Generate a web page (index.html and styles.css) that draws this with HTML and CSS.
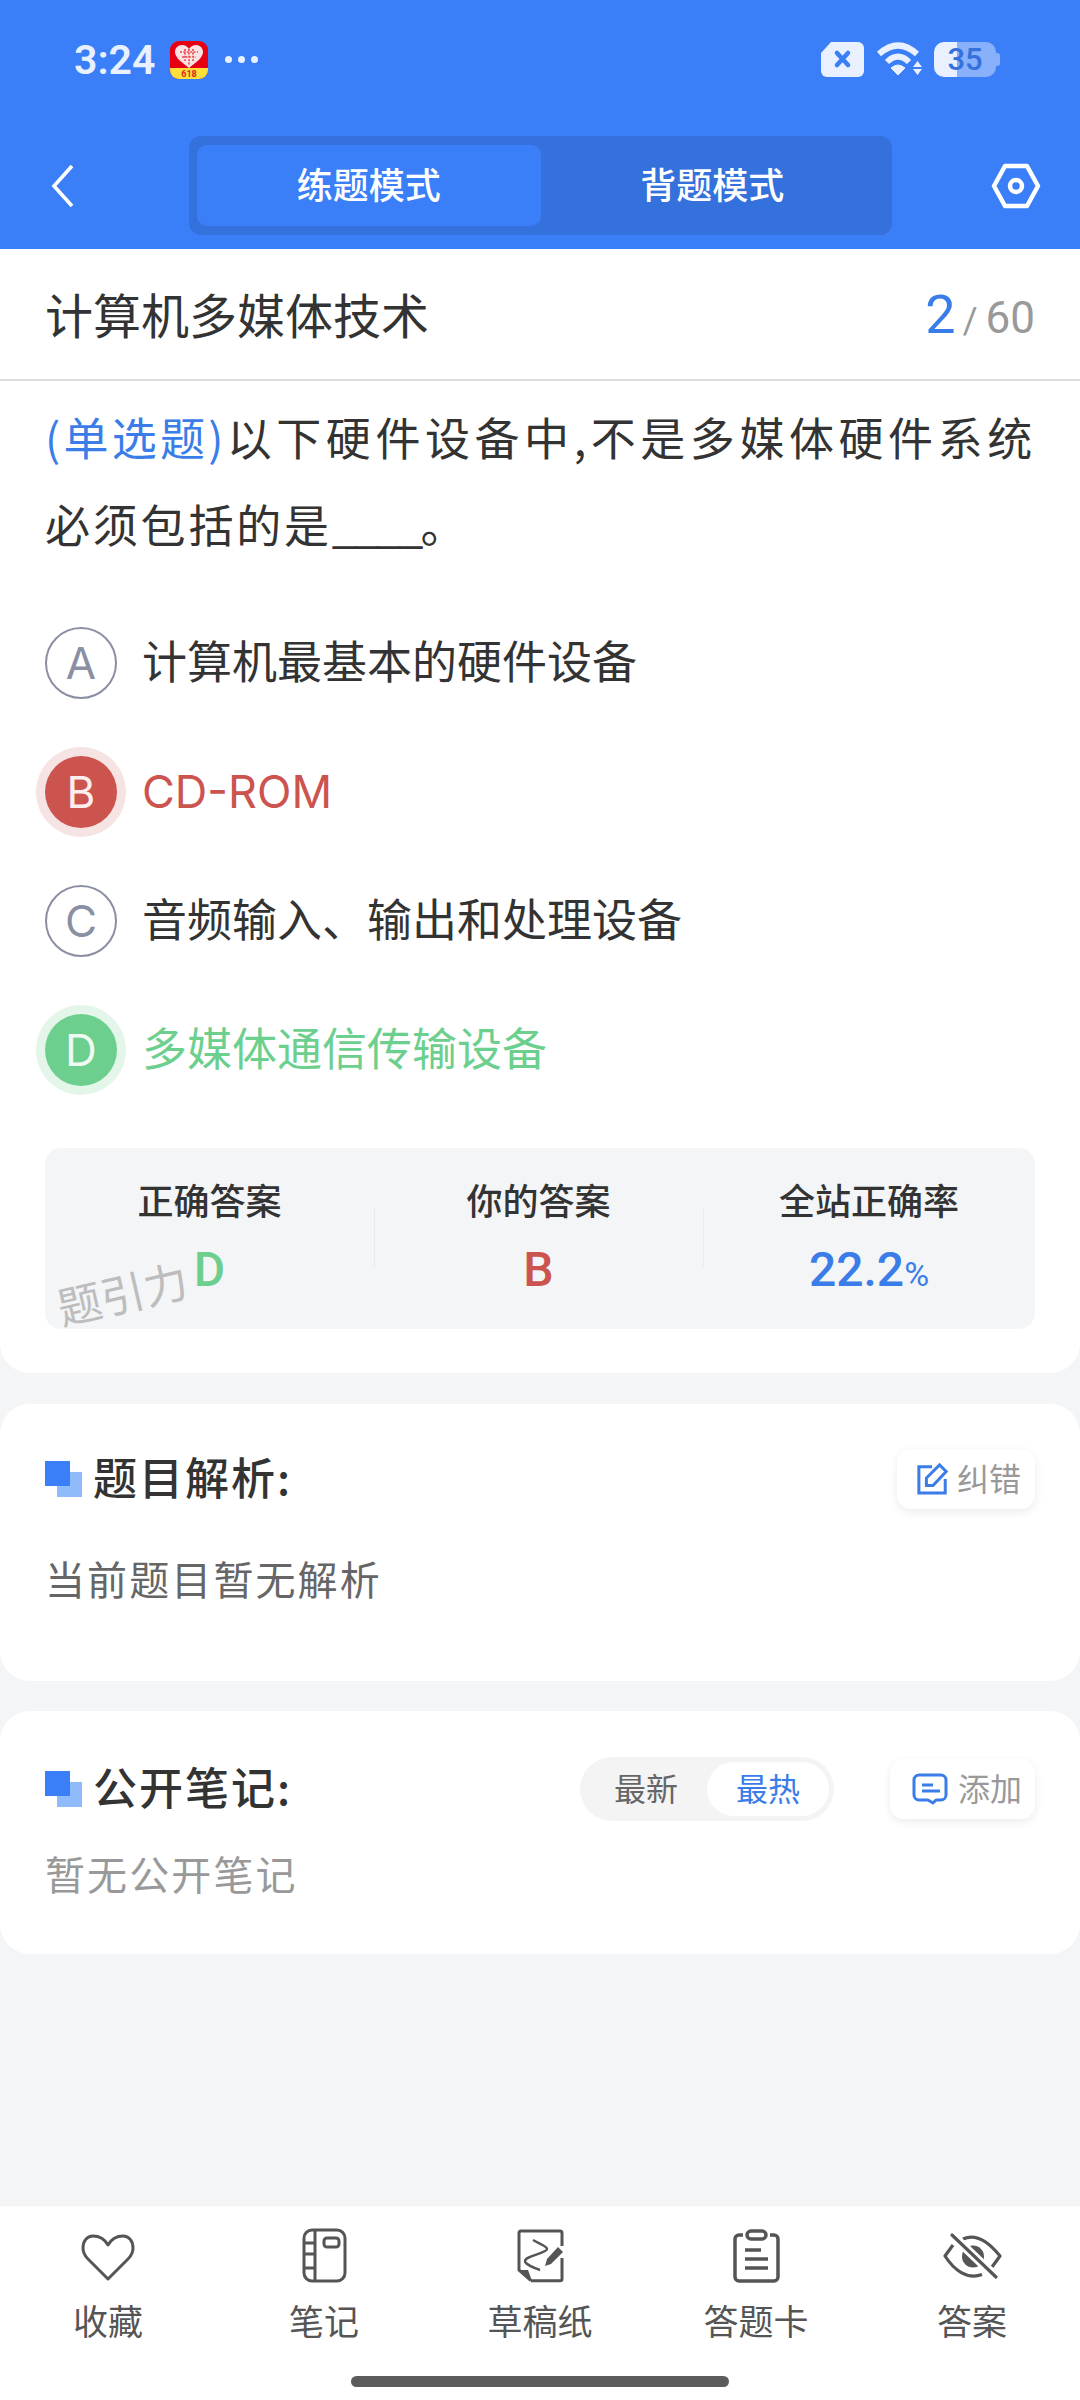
FILE: index.html
```html
<!DOCTYPE html>
<html lang="zh-CN">
<head>
    <meta charset="UTF-8">
    <meta name="viewport" content="width=device-width, initial-scale=1.0">
    <title>练题模式</title>
    <link rel="stylesheet" href="styles.css">
</head>
<body>
<div class="page">

    <!-- Blue header -->
    <header class="header">
        <div class="status-bar">
            <div class="status-left">
                <span class="clock">3:24</span>
                <svg class="app-icon" width="38" height="38" viewBox="0 0 38 38">
                    <rect width="38" height="38" rx="9" fill="#e60012"/>
                    <path d="M0 27h38v2a9 9 0 0 1-9 9H9a9 9 0 0 1-9-9z" fill="#ffdf3a"/>
                    <path d="M19 27C13 22 5 17 5 11c0-4 3-7 7-7 3 0 5 1 7 4 2-3 4-4 7-4 4 0 7 3 7 7 0 6-8 11-14 16z" fill="#fbe3e3"/>
                    <path d="M10 11h18M12 16h14M15 8v12M19 8v16M23 8v12" stroke="#e8434c" stroke-width="1.6" stroke-dasharray="2 1.4"/>
                    <text x="19" y="36" text-anchor="middle" class="app-icon-text">618</text>
                </svg>
                <span class="status-dots"><i></i><i></i><i></i></span>
            </div>
            <div class="status-right">
                <svg width="44" height="35" viewBox="0 0 44 35">
                    <path d="M11 0h27a6 6 0 0 1 6 6v23a6 6 0 0 1-6 6H7a6 6 0 0 1-6-6V11z" fill="#e9f0ff"/>
                    <path d="M17 11l11 12M28 11L17 23" stroke="#3b7ff8" stroke-width="4.5" stroke-linecap="round"/>
                </svg>
                <svg width="46" height="36" viewBox="0 0 46 36">
                    <path d="M3 13Q22-4 41 13M11 21Q22 10 33 21" fill="none" stroke="#e9f0ff" stroke-width="6"/>
                    <path d="M15 27Q22 21 29 27L22 34z" fill="#e9f0ff" stroke="#e9f0ff" stroke-linejoin="round"/>
                    <path d="M37 26l4.500-6 4.500 6zM37 28h9l-4.500 6z" fill="#e9f0ff"/>
                </svg>
                <div class="battery">
                    <span class="battery-num">35</span>
                </div>
            </div>
        </div>
        <nav class="nav">
            <svg class="nav-back" width="26" height="46" viewBox="0 0 26 46">
                <path d="M23 3L5 23l18 20" fill="none" stroke="#fff" stroke-width="3.600"/>
            </svg>
            <div class="mode-tabs">
                <div class="mode-tab mode-tab-on">练题模式</div>
                <div class="mode-tab">背题模式</div>
            </div>
            <svg class="nav-set" width="50" height="46" viewBox="0 0 50 46">
                <path d="M14 3h22l11 20-11 20H14L3 23z" fill="none" stroke="#fff" stroke-width="4.500" stroke-linejoin="round"/>
                <circle cx="25" cy="23" r="6" fill="none" stroke="#fff" stroke-width="4.500"/>
            </svg>
        </nav>
    </header>

    <main class="main">
        <!-- Question card -->
        <section class="card question-card">
            <div class="subject-row">
                <span class="subject">计算机多媒体技术</span>
                <span class="counter"><b>2</b><em>/</em>60</span>
            </div>
            <div class="question"><span class="q-type">(单选题)</span>以下硬件设备中,不是多媒体硬件系统必须包括的是<span class="q-blank">____</span>。</div>

            <div class="options">
                <div class="option">
                    <span class="opt-mark">A</span>
                    <span class="opt-text">计算机最基本的硬件设备</span>
                </div>
                <div class="option wrong">
                    <span class="opt-mark">B</span>
                    <span class="opt-text">CD-ROM</span>
                </div>
                <div class="option">
                    <span class="opt-mark">C</span>
                    <span class="opt-text">音频输入、输出和处理设备</span>
                </div>
                <div class="option right">
                    <span class="opt-mark">D</span>
                    <span class="opt-text">多媒体通信传输设备</span>
                </div>
            </div>

            <div class="stats">
                <div class="stat">
                    <div class="stat-label">正确答案</div>
                    <div class="stat-value green">D</div>
                </div>
                <div class="stat">
                    <div class="stat-label">你的答案</div>
                    <div class="stat-value red">B</div>
                </div>
                <div class="stat">
                    <div class="stat-label">全站正确率</div>
                    <div class="stat-value blue">22.2<small>%</small></div>
                </div>
                <span class="watermark">题引力</span>
            </div>
        </section>

        <!-- Analysis -->
        <section class="card analysis-card">
            <div class="sec-head">
                <span class="sec-mark"></span>
                <h2 class="sec-title">题目解析:</h2>
                <div class="mini-btn">
                    <svg width="32" height="32" viewBox="0 0 34 34">
                        <path d="M16 4H2v28h28V17" fill="none" stroke="#3b7de8" stroke-width="3.200"/>
                        <path d="M10 24v-8L24 2l7 7-14 15z" fill="none" stroke="#3b7de8" stroke-width="3.200"/>
                    </svg>
                    <span>纠错</span>
                </div>
            </div>
            <p class="sec-body analysis-text">当前题目暂无解析</p>
        </section>

        <!-- Public notes -->
        <section class="card notes-card">
            <div class="sec-head">
                <span class="sec-mark"></span>
                <h2 class="sec-title">公开笔记:</h2>
                <div class="sort-pill">
                    <span class="sort-item">最新</span>
                    <span class="sort-item sort-on">最热</span>
                </div>
                <div class="mini-btn add-btn">
                    <svg width="36" height="32" viewBox="0 0 36 32">
                        <path d="M7 2h22a5 5 0 0 1 5 5v15a5 5 0 0 1-5 5h-5l-3 3-5-3H7a5 5 0 0 1-5-5V7a5 5 0 0 1 5-5z" fill="none" stroke="#3b7de8" stroke-width="3" stroke-linejoin="round"/>
                        <path d="M10 12h11M10 18h18" stroke="#3b7de8" stroke-width="3"/>
                    </svg>
                    <span>添加</span>
                </div>
            </div>
            <p class="sec-body notes-text">暂无公开笔记</p>
        </section>
    </main>

    <!-- Bottom toolbar -->
    <footer class="toolbar">
        <div class="tools">
            <div class="tool">
                <svg width="60" height="60" viewBox="0 0 60 60">
                    <path d="M30 19C26 12 20 10 15 10 9 10 5 15 5 22c0 5 2 8 5 11l20 20 20-20c3-3 5-6 5-11 0-7-4-12-10-12-5 0-11 2-15 9z" fill="none" stroke="#555" stroke-width="3" stroke-linejoin="round"/>
                </svg>
                <span>收藏</span>
            </div>
            <div class="tool">
                <svg width="60" height="60" viewBox="0 0 60 60">
                    <rect x="10" y="4" width="41" height="51" rx="8" fill="none" stroke="#555" stroke-width="3"/>
                    <path d="M21 4v51M10 17h11M10 28h11M10 42h11" fill="none" stroke="#555" stroke-width="3"/>
                    <rect x="30" y="12" width="15" height="9" rx="3" fill="none" stroke="#555" stroke-width="3"/>
                </svg>
                <span>笔记</span>
            </div>
            <div class="tool">
                <svg width="60" height="60" viewBox="0 0 60 60">
                    <path d="M21 54.700H50a2 2 0 0 0 2-2V32M52 20V7a2 2 0 0 0-2-2H11a2 2 0 0 0-2 2v37l12 10.700" fill="none" stroke="#555" stroke-width="3"/>
                    <path d="M9 44h9l4 11z" fill="#555"/>
                    <path d="M23 14c7 4 14 6 14 9 0 4-22 7-22 12 0 3 9 7 15 9" fill="none" stroke="#555" stroke-width="2.500"/>
                    <path d="M35 40l2-7 11-12 5 5-12 12z" fill="#555"/>
                </svg>
                <span>草稿纸</span>
            </div>
            <div class="tool">
                <svg width="60" height="60" viewBox="0 0 60 60">
                    <path d="M17 9h-4a4 4 0 0 0-4 4v38a4 4 0 0 0 4 4h35a4 4 0 0 0 4-4V13a4 4 0 0 0-4-4h-4" fill="none" stroke="#555" stroke-width="3.500"/>
                    <rect x="21" y="5" width="19" height="8" rx="4" fill="none" stroke="#555" stroke-width="3.500"/>
                    <path d="M19 24h16M19 33h23M19 42h23" stroke="#555" stroke-width="3.500"/>
                </svg>
                <span>答题卡</span>
            </div>
            <div class="tool">
                <svg width="60" height="60" viewBox="0 0 60 60">
                    <circle cx="31" cy="30.500" r="11" fill="#555"/>
                    <path d="M21 13c13-6 25 2 37 17l-8 11M11 19l-8 11c9 14 22 24 37 18.500" fill="none" stroke="#555" stroke-width="3.200" stroke-linejoin="round"/>
                    <path d="M10 9l44 42" stroke="#fff" stroke-width="9"/>
                    <path d="M10 9l44 42" stroke="#555" stroke-width="3.200" stroke-linecap="round"/>
                </svg>
                <span>答案</span>
            </div>
        </div>
        <div class="home-bar"></div>
    </footer>
</div>
</body>
</html>
```

FILE: styles.css
```css
* {
    box-sizing: border-box;
}

body {
    margin: 0;
    font-family: "Noto Sans CJK SC", "Noto Sans", sans-serif;
    background-color: #f4f5f7;
    color: #333;
}

.page {
    width: 1080px;
    height: 2400px;
    display: flex;
    flex-direction: column;
    overflow: hidden;
}

/* Header */
.header {
    background-color: #3b7ff8;
    height: 249px;
    color: #fff;
}

.status-bar {
    height: 95px;
    padding: 41px 80px 0 74px;
    display: flex;
    justify-content: space-between;
    align-items: flex-start;
}

.status-left {
    display: flex;
    align-items: center;
    gap: 15px;
    height: 37px;
}

.clock {
    font-family: Roboto, sans-serif;
    font-size: 41px;
    font-weight: 600;
    color: #e9f0ff;
}

.app-icon-text {
    font-family: Roboto, sans-serif;
    font-size: 9px;
    font-weight: 700;
    fill: #d9261c;
}

.status-dots {
    display: flex;
    gap: 6px;
    margin-left: 2px;
}

.status-dots i {
    width: 7px;
    height: 7px;
    border-radius: 50%;
    background-color: #e9f0ff;
}

.status-right {
    display: flex;
    align-items: center;
    gap: 12px;
}

.battery {
    position: relative;
    width: 62px;
    height: 35px;
    margin-right: 4px;
    border-radius: 10px;
    background: linear-gradient(90deg, #e9f0ff 23px, #88b0fb 23px);
    display: flex;
    align-items: center;
    justify-content: center;
}

.battery::after {
    content: "";
    position: absolute;
    right: -4px;
    top: 11px;
    width: 4px;
    height: 13px;
    border-radius: 0 3px 3px 0;
    background-color: #88b0fb;
}

.battery-num {
    font-family: Roboto, sans-serif;
    font-size: 31px;
    font-weight: 500;
    color: #3571dc;
}

.nav {
    height: 154px;
    padding: 41px 0 14px 49px;
    display: flex;
    align-items: center;
}

.mode-tabs {
    width: 703px;
    height: 99px;
    margin-left: 114px;
    padding: 9px 8px;
    border-radius: 12px;
    background-color: #3571dc;
    display: flex;
}

.nav-set {
    margin-left: 99px;
}

.mode-tab {
    flex: 1;
    display: flex;
    align-items: center;
    justify-content: center;
    padding-bottom: 5px;
    border-radius: 10px;
    font-size: 36px;
    font-weight: 500;
}

.mode-tab-on {
    background-color: #3b7ff8;
}

/* Main scrolling area */
.main {
    flex: 1;
}

.card {
    background-color: #fff;
    border-radius: 30px;
    margin-bottom: 30px;
}

.question-card {
    height: 1124px;
    border-radius: 0 0 30px 30px;
    padding: 0 45px;
    margin-bottom: 31px;
}

.subject-row {
    height: 132px;
    margin: 0 -45px;
    padding: 0 45px;
    border-bottom: 2px solid #dedede;
    display: flex;
    align-items: center;
    justify-content: space-between;
}

.subject {
    font-size: 48px;
    line-height: 1;
    padding-bottom: 3px;
}

.counter {
    font-family: Roboto, sans-serif;
    font-size: 44px;
    color: #999;
}

.counter b {
    font-size: 54px;
    font-weight: 400;
    color: #3b7de8;
}

.counter em {
    font-style: normal;
    font-size: 36px;
    margin: 0 8px 0 7px;
}

.question {
    margin-top: 12px;
    font-size: 45px;
    line-height: 87px;
    letter-spacing: 2.800px;
    text-align: justify;
}

.q-type {
    color: #3b7de8;
    letter-spacing: 1.500px;
}

.q-blank {
    letter-spacing: -3px;
}

.options {
    margin-top: 31px;
}

.option {
    height: 129px;
    display: flex;
    align-items: center;
    gap: 25px;
    font-family: Inter, "Noto Sans CJK SC", sans-serif;
    font-size: 45px;
}

.opt-text {
    padding-bottom: 6px;
}

.opt-mark {
    width: 72px;
    height: 72px;
    flex-shrink: 0;
    border: 2px solid #8b8fa3;
    border-radius: 50%;
    display: flex;
    align-items: center;
    justify-content: center;
    font-size: 44px;
    color: #8b8fa3;
}

.wrong .opt-mark {
    border: none;
    background-color: #cc544f;
    color: #fdeeee;
    box-shadow: 0 0 0 9px #f6e3e3;
}

.wrong .opt-text {
    color: #cc544f;
    padding-bottom: 0;
}

.right .opt-mark {
    border: none;
    background-color: #6dcf8e;
    color: #eefaf2;
    box-shadow: 0 0 0 9px #e4f6ea;
}

.right .opt-text {
    color: #6dcf8e;
}

/* Answer stats */
.stats {
    position: relative;
    margin-top: 34px;
    height: 181px;
    border-radius: 16px;
    background-color: #f4f5f7;
    display: grid;
    grid-template-columns: 329px 329px 332px;
}

.stat {
    padding-top: 26px;
    text-align: center;
    position: relative;
}

.stat + .stat::before {
    content: "";
    position: absolute;
    left: 0;
    top: 60px;
    height: 59px;
    width: 1px;
    background-color: #e9eaed;
}

.stat-label {
    font-size: 36px;
    font-weight: 500;
    line-height: 50px;
}

.stat-value {
    margin-top: 21px;
    font-family: Roboto, sans-serif;
    font-size: 48px;
    font-weight: 500;
    line-height: 50px;
}

.stat-value small {
    font-size: 34px;
    font-weight: 400;
}

.green {
    color: #6dcf8e;
}

.red {
    color: #cc544f;
}

.blue {
    color: #3b7de8;
}

.watermark {
    position: absolute;
    left: 11px;
    top: 112px;
    font-size: 44px;
    color: #bdbdbd;
    transform: rotate(-13deg);
}

/* Analysis and notes */
.sec-head {
    display: flex;
    align-items: center;
}

.sec-mark {
    width: 25px;
    height: 25px;
    margin-right: 23px;
    margin-top: -11px;
    background-color: #3b7ff8;
    box-shadow: 12px 11px 0 #8fbbfb;
}

.sec-title {
    margin: 0;
    flex: 1;
    font-size: 44px;
    font-weight: 500;
    letter-spacing: 2px;
    line-height: 54px;
    padding-bottom: 6px;
}

.mini-btn {
    height: 60px;
    padding: 0 14px 0 20px;
    border-radius: 14px;
    background-color: #fff;
    box-shadow: 0 3px 10px rgba(0, 0, 0, 0.08);
    display: flex;
    align-items: center;
    gap: 8px;
    font-size: 32px;
    color: #999;
}

.add-btn {
    padding: 0 13px 0 22px;
    gap: 10px;
}

.mini-btn span {
    padding-bottom: 5px;
}

.sec-body {
    margin: 0;
    font-size: 40px;
    letter-spacing: 2.100px;
    line-height: 60px;
}

.analysis-card {
    height: 277px;
    padding: 45px 45px 0;
}

.analysis-text {
    margin-top: 39px;
    color: #666;
}

.notes-card {
    height: 243px;
    padding: 46px 45px 0;
    margin-bottom: 0;
}

.notes-text {
    margin-top: 22px;
    color: #999;
}

.sort-pill {
    width: 254px;
    height: 64px;
    margin-right: 56px;
    padding: 5px;
    border-radius: 32px;
    background-color: #f4f4f5;
    display: flex;
}

.sort-item {
    flex: 1;
    display: flex;
    align-items: center;
    justify-content: center;
    padding-bottom: 5px;
    border-radius: 27px;
    font-size: 32px;
    color: #666;
}

.sort-on {
    background-color: #fff;
    color: #3b7de8;
}

/* Bottom toolbar */
.toolbar {
    height: 195px;
    background-color: #fff;
    border-top: 1px solid #f0f0f0;
}

.tools {
    display: grid;
    grid-template-columns: repeat(5, 1fr);
    padding-top: 20px;
}

.tool {
    display: flex;
    flex-direction: column;
    align-items: center;
    font-size: 35px;
    line-height: 50px;
    color: #555;
}

.tool span {
    margin-top: 9px;
}

.home-bar {
    width: 378px;
    height: 11px;
    margin: 31px auto 0;
    border-radius: 6px;
    background-color: #5c5c5c;
}
```
